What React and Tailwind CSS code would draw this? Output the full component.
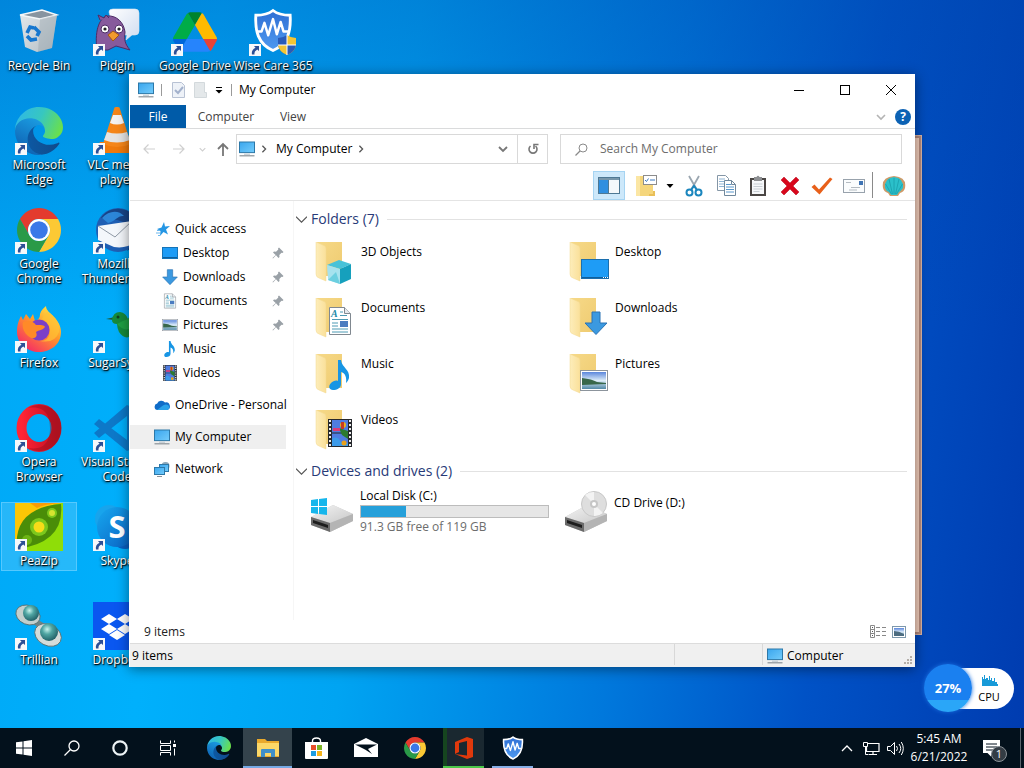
import { useState } from 'react';

// Gradients shared by all the icons
function Defs() {
  return (
    <svg className="absolute w-0 h-0" aria-hidden="true">
      <defs>
        <linearGradient id="screen" x1="0" y1="0" x2="1" y2="1">
          <stop offset="0" stopColor="#3aa6ee" />
          <stop offset="1" stopColor="#74ccfb" />
        </linearGradient>
        <linearGradient id="edgeDark" x1="0" y1="0" x2="1" y2="0">
          <stop offset="0" stopColor="#0c59a4" />
          <stop offset="1" stopColor="#114a8b" />
        </linearGradient>
        <linearGradient id="edgeBlue" x1="0.6" y1="0" x2="0.2" y2="1">
          <stop offset="0" stopColor="#1b9de2" />
          <stop offset="1" stopColor="#0d5cae" />
        </linearGradient>
        <linearGradient id="edgeGreen" x1="0" y1="0.3" x2="1" y2="0.6">
          <stop offset="0" stopColor="#2fb8e6" />
          <stop offset="0.5" stopColor="#37c7c0" />
          <stop offset="1" stopColor="#6be04a" />
        </linearGradient>
        <linearGradient id="folderBack" x1="0" y1="0" x2="1" y2="1">
          <stop offset="0" stopColor="#f6d988" />
          <stop offset="1" stopColor="#efcb70" />
        </linearGradient>
        <linearGradient id="folderFront" x1="0" y1="0" x2="1" y2="0">
          <stop offset="0" stopColor="#fdedba" />
          <stop offset="1" stopColor="#fae09a" />
        </linearGradient>
        <linearGradient id="foxBody" x1="0.9" y1="0" x2="0.2" y2="1">
          <stop offset="0" stopColor="#fff04a" />
          <stop offset="0.45" stopColor="#ff9a2a" />
          <stop offset="1" stopColor="#f5246a" />
        </linearGradient>
        <linearGradient id="operaRing" x1="0" y1="0" x2="1" y2="0">
          <stop offset="0" stopColor="#ff2536" />
          <stop offset="0.5" stopColor="#e0192c" />
          <stop offset="1" stopColor="#c01424" />
        </linearGradient>
        <linearGradient id="binSide" x1="0" y1="0" x2="1" y2="1">
          <stop offset="0" stopColor="#e4e9ec" />
          <stop offset="1" stopColor="#b4bec5" />
        </linearGradient>
        <linearGradient id="bubble" x1="0" y1="0" x2="1" y2="1">
          <stop offset="0" stopColor="#ffffff" />
          <stop offset="1" stopColor="#cfdcf0" />
        </linearGradient>
        <linearGradient id="shield" x1="0" y1="0" x2="0" y2="1">
          <stop offset="0" stopColor="#2f6fd4" />
          <stop offset="1" stopColor="#4f9af0" />
        </linearGradient>
        <linearGradient id="skype" x1="0" y1="0" x2="1" y2="1">
          <stop offset="0" stopColor="#16a8f0" />
          <stop offset="1" stopColor="#0a5fc0" />
        </linearGradient>
        <radialGradient id="gem" cx="0.4" cy="0.35" r="0.7">
          <stop offset="0" stopColor="#c8f4ee" />
          <stop offset="0.4" stopColor="#4fa5a2" />
          <stop offset="1" stopColor="#1d5a62" />
        </radialGradient>
        <linearGradient id="driveTop" x1="0" y1="0" x2="1" y2="1">
          <stop offset="0" stopColor="#f4f4f4" />
          <stop offset="1" stopColor="#c8c8c8" />
        </linearGradient>
        <linearGradient id="photo" x1="0" y1="0" x2="0" y2="1">
          <stop offset="0" stopColor="#5a86dc" />
          <stop offset="0.5" stopColor="#dcecf8" />
          <stop offset="1" stopColor="#4f87a5" />
        </linearGradient>
      </defs>
    </svg>
  );
}

function Monitor({ className = 'w-4 h-4 shrink-0' }) {
  return (
    <svg viewBox="0 0 16 16" className={className}>
      <rect x="0.5" y="1" width="15" height="10.6" fill="url(#screen)" stroke="#2d78a8" />
      <path d="M5 13.2h6" stroke="#b8c4cc" />
      <path d="M0.5 14.8h15" stroke="#8a9298" strokeWidth="1.2" />
    </svg>
  );
}

function EdgeIcon({ className }) {
  return (
    <svg viewBox="0 0 256 256" className={className}>
      <path fill="url(#edgeDark)" d="M231.3,190.5c-3.4,1.8-6.9,3.4-10.5,4.7c-11.5,4.3-23.6,6.5-35.9,6.5c-47.3,0-88.5-32.5-88.5-74.3c0.1-11.4,6.4-21.9,16.4-27.3c-42.8,1.8-53.8,46.4-53.8,72.5c0,73.9,68.1,81.4,82.8,81.4c7.9,0,19.8-2.3,27-4.6l1.3-0.4c27.6-9.5,51-28.1,66.6-52.8c1.2-1.9,0.6-4.3-1.2-5.5C234.2,189.8,232.6,189.7,231.3,190.5z" />
      <path fill="url(#edgeBlue)" d="M105.7,241.4c-8.9-5.5-16.6-12.8-22.7-21.3c-26.3-36-18.4-86.5,17.6-112.8c3.8-2.7,7.7-5.2,11.9-7.2c3.1-1.5,8.4-4.1,15.5-4c10.1,0.1,19.6,4.9,25.7,13c4,5.4,6.3,11.9,6.4,18.7c0-0.2,24.5-79.6-80-79.6c-43.9,0-80,41.7-80,78.2c-0.2,19.3,4,38.5,12.1,56c27.6,58.8,94.8,87.6,156.4,67.1C147.5,256.1,124.5,253.2,105.7,241.4L105.7,241.4z" />
      <path fill="url(#edgeGreen)" d="M152.3,148.9c-0.9,1-3.4,2.5-3.4,5.6c0,2.6,1.7,5.2,4.8,7.3c14.3,10,41.4,8.6,41.5,8.6c10.7,0,21.1-2.9,30.3-8.3c18.8-11,30.4-31.1,30.4-52.9c0.3-22.4-8-37.3-11.3-43.9C223.5,23.9,177.7,0,128,0C58,0,1,56.2,0,126.2c0.5-36.5,36.8-66,80-66c3.5,0,23.5,0.3,42,10.1c16.3,8.6,24.9,18.9,30.8,29.2c6.2,10.7,7.3,24.1,7.3,29.5C160.1,134.4,157.4,142.3,152.3,148.9L152.3,148.9z" />
    </svg>
  );
}

function ChromeIcon({ className }) {
  return (
    <svg viewBox="2 2 44 44" className={className}>
      <path fill="#e33b2e" d="M24 13H43.05A22 22 0 0 0 4.95 13L14.47 29.5A11 11 0 0 1 24 13Z" />
      <path fill="#fcc934" d="M33.53 29.5L24 46A22 22 0 0 0 43.05 13H24A11 11 0 0 1 33.53 29.5Z" />
      <path fill="#2a9a48" d="M14.47 29.5L4.95 13A22 22 0 0 0 24 46L33.53 29.5A11 11 0 0 1 14.47 29.5Z" />
      <circle cx="24" cy="24" r="11" fill="#fff" />
      <circle cx="24" cy="24" r="8.8" fill="#3a78e8" />
    </svg>
  );
}

function WiseShield({ className }) {
  return (
    <svg viewBox="0 0 42 46" className={className}>
      <path d="M21 2C16 6 9 7 3 7c-1 16 2 30 18 37C37 37 40 23 39 7 33 7 26 6 21 2Z" fill="url(#shield)" stroke="#fff" strokeWidth="3" />
      <path d="M5 24h4l3-9 4 13 5-17 4 16 4-13 3 10h5" fill="none" stroke="#fff" strokeWidth="2.6" strokeLinejoin="round" />
    </svg>
  );
}

const desktopArt = {
  bin: (
    <svg viewBox="0 0 48 48" className="w-12 h-12">
      <path d="M5 7l22-5 15 5-5 33-15 4-12-5Z" fill="url(#binSide)" />
      <path d="M5 7l22-5 15 5-17 4Z" fill="#8794a0" stroke="#f4f7f9" strokeWidth="1.4" />
      <path d="M25 11l17-4-5 33-14 4Z" fill="#8d9aa4" opacity="0.35" />
      <g fill="none" stroke="#1677cf" strokeWidth="3.6">
        <path d="M12 25l3-6 4 1" />
        <path d="M19 19l5 5-2 4" />
        <path d="M22 31l-6 1-4-4" />
      </g>
    </svg>
  ),
  pidgin: (
    <svg viewBox="0 0 48 48" className="w-12 h-12">
      <path d="M16 4q0-3 4-3h22q4 0 4 4v18q0 4-4 4h-3l-6 5 1-5H22Z" fill="url(#bubble)" stroke="#dbe5f2" strokeWidth="0.6" />
      <path d="M4 42C1 20 8 9 14 8c10-1 17 7 18 16-1 8 0 12 5 18l-14-4-8 4Z" fill="#875a9c" stroke="#4e2c66" />
      <path d="M7 12l-2-5 6 3 2-3 3 3" fill="#875a9c" stroke="#4e2c66" />
      <circle cx="12" cy="21" r="4" fill="#fff" stroke="#4e2c66" />
      <circle cx="26" cy="21" r="4" fill="#fff" stroke="#4e2c66" />
      <circle cx="12" cy="21" r="1.6" fill="#222" />
      <circle cx="26" cy="21" r="1.6" fill="#222" />
      <path d="M15 27l5-4 6 4-6 6Z" fill="#f29b2c" stroke="#a35a10" />
    </svg>
  ),
  drive: (
    <svg viewBox="0 0 87.3 78" className="w-11 h-10 mt-1 mx-auto">
      <path d="m6.6 66.85 3.85 6.65c.8 1.4 1.95 2.5 3.3 3.3l13.75-23.8h-27.5c0 1.55.4 3.1 1.2 4.5z" fill="#0066da" />
      <path d="m43.65 25-13.75-23.8c-1.35.8-2.5 1.9-3.3 3.3l-25.4 44a9.06 9.06 0 0 0 -1.2 4.5h27.5z" fill="#00ac47" />
      <path d="m73.55 76.8c1.35-.8 2.5-1.9 3.3-3.3l1.6-2.75 7.65-13.25c.8-1.4 1.2-2.95 1.2-4.5h-27.502l5.852 11.5z" fill="#ea4335" />
      <path d="m43.65 25 13.75-23.8c-1.35-.8-2.9-1.2-4.5-1.2h-18.5c-1.6 0-3.15.45-4.5 1.2z" fill="#00832d" />
      <path d="m59.8 53h-32.3l-13.75 23.8c1.35.8 2.9 1.2 4.5 1.2h50.8c1.6 0 3.15-.45 4.5-1.2z" fill="#2684fc" />
      <path d="m73.4 26.5-12.7-22c-.8-1.4-1.95-2.5-3.3-3.3l-13.75 23.8 16.15 28h27.45c0-1.55-.4-3.1-1.2-4.5z" fill="#ffba00" />
    </svg>
  ),
  wise: (
    <div className="relative w-12 h-12">
      <WiseShield className="w-10 h-[45px] mx-auto" />
      <svg viewBox="0 0 20 22" className="absolute right-0 bottom-0 w-5 h-[22px]">
        <path d="M10 1Q6 4 1 4v7q1 7 9 10Z" fill="#2a5bb8" />
        <path d="M10 1q4 3 9 3v7q-1 7-9 10Z" fill="#f4c534" />
        <path d="M1 11h9v10Q2 18 1 11Z" fill="#f4c534" />
        <path d="M10 11h9q-1 7-9 10Z" fill="#2a5bb8" />
        <path d="M10 1v20M1 11h18" stroke="#fff" />
      </svg>
    </div>
  ),
  edge: <EdgeIcon className="w-12 h-12" />,
  vlc: (
    <svg viewBox="0 0 48 48" className="w-12 h-12">
      <path d="M7 35h34l6 10q0 1-2 1H3q-2 0-2-1Z" fill="#f07a0c" />
      <path d="M23 0h2q2 0 2 2l11 35q-14 6-28 0L21 2q0-2 2-2Z" fill="#f5861a" />
      <path d="M20 8h8l3 8q-7 3-14 0Z" fill="#f3f3f3" />
      <path d="M14 25q10 3 20 0l3 8q-13 5-26 0Z" fill="#e4e4e4" />
    </svg>
  ),
  chrome: <ChromeIcon className="w-11 h-11 mx-auto mt-0.5" />,
  thunderbird: (
    <svg viewBox="0 0 48 48" className="w-12 h-12">
      <circle cx="25" cy="24" r="22" fill="#1f5fb4" />
      <path d="M8 12C16-1 37 0 43 14c5 11 1 25-9 31 8-12 5-24-4-29-8-4-15-2-22-4Z" fill="#174487" />
      <path d="M9 12c7-8 17-8 22-2-6-1-8 5-16 7Z" fill="#2c86d8" />
      <path d="M5 20l34-5 4 21q-10 7-22 5L5 34Z" fill="#f4f7fb" />
      <path d="M5 20l17 11 17-16" fill="none" stroke="#909aa6" />
    </svg>
  ),
  firefox: (
    <svg viewBox="0 0 48 48" className="w-12 h-12">
      <path d="M2 27C2 19 4 15 6 11l2 4 3-6 4 5 3-5 2 7c3-1 5-3 5-7 1-4 4-6 6-8 0 5 5 7 8 11 4 4 7 9 7 15 0 13-11 20-22 20S2 39 2 27Z" fill="url(#foxBody)" />
      <circle cx="24" cy="25" r="10.5" fill="#7b3fc8" />
      <path d="M8 17c6-2 10-1 13 3 5 0 8 0 9 2-3 4-7 3-9 5 3 7-5 8-9 3-4-4-5-9-4-13Z" fill="#ff8a28" />
      <path d="M27 14q9 4 8 13-1 9-10 9 15 3 19-9 1-14-12-20-4 3-5 7Z" fill="#ffc234" opacity="0.7" />
    </svg>
  ),
  bird: (
    <svg viewBox="0 0 48 48" className="w-12 h-12">
      <path d="M13 14l9-2-1 3Z" fill="#1c5a34" />
      <path d="M19 15q1-8 8-8 6 1 8 7L44 0q5 20-4 30-8 6-14-3-2-5-2-8-5 0-5-4Z" fill="#168a3c" />
      <path d="M24 19q5-3 11-5l6-8q2 14-5 18-6 2-12-5Z" fill="#1fa044" />
      <circle cx="25" cy="12" r="1.5" fill="#103d22" />
    </svg>
  ),
  opera: (
    <svg viewBox="0 0 48 48" className="w-12 h-12">
      <ellipse cx="24" cy="24" rx="17.5" ry="19" fill="none" stroke="url(#operaRing)" strokeWidth="10" />
      <path d="M24 1c12 0 22 9 22 23S36 47 24 47c-4 0-8-1-11-3 18 3 22-9 22-20S31 1 13 4c3-2 7-3 11-3Z" fill="#8e0c19" opacity="0.4" />
    </svg>
  ),
  vscode: (
    <svg viewBox="0 0 48 48" className="w-12 h-12">
      <path d="M34 1l12 5v36l-12 5L1 20l5-5 28 21V12L6 34l-5-5Z" fill="#0d78c8" />
    </svg>
  ),
  peazip: (
    <svg viewBox="0 0 48 48" className="w-12 h-12">
      <rect width="48" height="48" fill="#8fdd08" />
      <path d="M0 0h47Q12 5 0 43Z" fill="#fcc606" />
      <path d="M15 0h32q-18 1-25 5Z" fill="#f79b08" />
      <path d="M2 46Q-2 5 46 1 50 40 2 46Z" fill="#4a8d08" />
      <circle cx="24" cy="24" r="9" fill="#7cc81c" />
      <circle cx="24" cy="24" r="5.5" fill="#f6dc18" />
      <circle cx="37" cy="10" r="5" fill="#7cc81c" />
      <circle cx="37" cy="10" r="3" fill="#d6e430" />
      <circle cx="12" cy="37" r="5" fill="#6db414" />
    </svg>
  ),
  skype: (
    <svg viewBox="0 0 48 48" className="w-12 h-12">
      <circle cx="16" cy="16" r="14" fill="#18a4ec" />
      <circle cx="32" cy="32" r="14" fill="#0a5fc0" />
      <circle cx="24" cy="24" r="20" fill="url(#skype)" />
      <text x="24" y="35" textAnchor="middle" fontFamily="Open Sans, sans-serif" fontWeight="700" fontSize="31" fill="#fff">S</text>
    </svg>
  ),
  trillian: (
    <svg viewBox="0 0 48 48" className="w-12 h-12">
      <path d="M20 16l10 6-4 6-10-8Z" fill="#6d8486" />
      <g stroke="#526a6c" strokeWidth="0.8">
        <ellipse cx="13" cy="13" rx="12.500" ry="9.500" fill="#c3cfcd" transform="rotate(22 13 13)" />
        <ellipse cx="33" cy="33" rx="14" ry="10.500" fill="#d5dcda" transform="rotate(28 33 33)" />
      </g>
      <circle cx="16" cy="11" r="8" fill="url(#gem)" />
      <circle cx="34" cy="30" r="9" fill="url(#gem)" />
    </svg>
  ),
  dropbox: (
    <svg viewBox="0 0 48 48" className="w-12 h-12">
      <rect width="48" height="48" fill="#0a57f0" />
      <path d="M16 12l8 5-8 5-8-5ZM32 12l8 5-8 5-8-5ZM16 22l8 5-8 5-8-5ZM32 22l8 5-8 5-8-5ZM24 28l8 5-8 5-8-5Z" fill="#fff" />
    </svg>
  ),
};

const desktopColumns = [
  [
    { label: 'Recycle Bin', art: 'bin', noArrow: true },
    { label: 'Microsoft\nEdge', art: 'edge' },
    { label: 'Google\nChrome', art: 'chrome' },
    { label: 'Firefox', art: 'firefox' },
    { label: 'Opera\nBrowser', art: 'opera' },
    { label: 'PeaZip', art: 'peazip', selected: true },
    { label: 'Trillian', art: 'trillian' },
  ],
  [
    { label: 'Pidgin', art: 'pidgin' },
    { label: 'VLC media\nplayer', art: 'vlc' },
    { label: 'Mozilla\nThunderbird', art: 'thunderbird' },
    { label: 'SugarSync', art: 'bird' },
    { label: 'Visual Studio\nCode', art: 'vscode' },
    { label: 'Skype', art: 'skype' },
    { label: 'Dropbox', art: 'dropbox' },
  ],
  [{ label: 'Google Drive', art: 'drive' }],
  [{ label: 'Wise Care 365', art: 'wise' }],
];

function DesktopIcon({ item }) {
  return (
    <div className="h-[99px]">
      <button
        className={
          'w-[76px] h-[69px] flex flex-col items-center border ' +
          (item.selected ? 'border-sky-300/60 bg-white/15' : 'border-transparent')
        }
      >
        <span className="relative block w-12 h-12 shrink-0">
          {desktopArt[item.art]}
          {!item.noArrow && (
            <svg viewBox="0 0 12 12" className="absolute left-0 bottom-0 w-3 h-3">
              <rect width="12" height="12" fill="#f6f8fa" />
              <path d="M5 2h5v5L8.300 5.500Q5 7 5.500 10.500H3Q2 6 6.500 3.700Z" fill="#2c4f96" />
            </svg>
          )}
        </span>
        <span className="mt-0.5 text-xs leading-[15px] text-white text-center whitespace-pre [text-shadow:1px_1px_1px_#000,0_1px_3px_#000]">
          {item.label}
        </span>
      </button>
    </div>
  );
}

// Small pictures laid over the folders, also used at 16px in the side bar
function Film() {
  return (
    <g>
      <rect width="24" height="28" fill="#26282c" />
      <rect x="4" y="1" width="16" height="12.500" fill="#4f7ce0" />
      <rect x="4" y="14.500" width="16" height="12.500" fill="#4f7ce0" />
      <path d="M2 1v27M22 1v27" stroke="#eee" strokeWidth="2" strokeDasharray="2 2" />
      <circle cx="15" cy="6" r="3" fill="#e8b21c" />
      <path d="M11 9l9 3v8l-6-4Z" fill="#2c7a30" />
      <path d="M5 9h7v3H5Z" fill="#d83c78" />
      <path d="M4 20q5-4 9 3l7 1v3H4Z" fill="#3c9ae8" />
      <path d="M13 3h3v7h-3Z" fill="#c83a20" />
      <circle cx="16" cy="24" r="2.500" fill="#e8a01c" />
    </g>
  );
}

function DocPage() {
  return (
    <g>
      <path d="M0.500 0.500h15l6 6v21h-21Z" fill="#fff" stroke="#808890" />
      <path d="M15.500 0.500v6h6" fill="#e6eaee" stroke="#808890" />
      <text x="2" y="10" fontFamily="Liberation Serif, serif" fontStyle="italic" fontWeight="700" fontSize="10" fill="#2389a8">A</text>
      <path d="M11 5h3M11 8.500h7M3 12.500h16M3 16h6M3 19h6M3 22h16M3 25h16" stroke="#4d9ab4" />
      <rect x="11" y="14" width="8" height="6" fill="#4a7cc0" />
    </g>
  );
}

function Note() {
  return (
    <path d="M9 0h3c1 8 9 9 8 18-1 3-2 4-3 5 1-6-1-10-5-11v12c0 4-4 6-8 6s-5-4-2-7c2-2 5-3 7-2Z" fill="#1795e4" />
  );
}

function Photo() {
  return (
    <g>
      <rect x="0.500" y="0.500" width="27" height="20" fill="#fff" stroke="#8c949c" />
      <rect x="2" y="2" width="24" height="17" fill="url(#photo)" />
      <path d="M2 8q10 1 15 4l9 1v1l-24 1Z" fill="#38674a" />
    </g>
  );
}

function DownArrow() {
  return <path d="M8 1h8v11h7L12 23.500 1 12h7Z" fill="#3b99e0" stroke="#2a73b4" />;
}

function Cube() {
  return (
    <g>
      <path d="M0 5l12-5 12 4-11 5Z" fill="#48c2d8" />
      <path d="M0 5l13 4v15L1 20Z" fill="#a6e2ee" />
      <path d="M13 9l11-5v15l-11 5Z" fill="#16a0bd" />
      <path d="M1 20l8-8 4 12Z" fill="#6ccfe0" />
    </g>
  );
}

const overlays = {
  cube: <g transform="translate(14 18)"><Cube /></g>,
  desktop: (
    <g>
      <rect x="14.500" y="17.500" width="27" height="19" fill="#1e9cf6" stroke="#1b6fae" />
      <path d="M15 35.500h26" stroke="#0f5f9c" />
      <path d="M36 35.500h5" stroke="#fff" strokeDasharray="1 1" />
    </g>
  ),
  doc: <g transform="translate(16 9)"><DocPage /></g>,
  down: <g transform="translate(17 13)"><DownArrow /></g>,
  music: <g transform="translate(16 6)"><Note /></g>,
  photo: <g transform="translate(13 16)"><Photo /></g>,
  film: <g transform="translate(15 9)"><Film /></g>,
};

function FolderIcon({ kind }) {
  return (
    <svg viewBox="0 0 44 44" className="w-11 h-11 shrink-0">
      <path d="M4 0h25v34H8Z" fill="url(#folderBack)" />
      <path d="M3 0l9 4q1 1 1 3v32l-7-3q-3-1-3-4Z" fill="url(#folderFront)" stroke="#f3d890" strokeWidth="0.500" />
      {overlays[kind]}
    </svg>
  );
}

function DiskIcon({ cd }) {
  return (
    <svg viewBox="0 0 44 44" className="w-11 h-11 shrink-0">
      <path d="M0 27l22-12 20 9v7L19 42 0 35Z" fill="#c9c9c9" />
      <path d="M0 27l22-12 20 9-23 9Z" fill="url(#driveTop)" />
      <path d="M19 33l23-9v7L19 42Z" fill="#b4b4b4" />
      <path d="M0 27l19 6v9L0 35Z" fill="#6a6a6a" />
      <path d="M2 30l15 5v3L2 33Z" fill="#1d1d1d" />
      {cd ? (
        <g>
          <circle cx="29" cy="14" r="12.500" fill="#dedede" stroke="#c8c8c8" />
          <path d="M29 14L20 5a13 13 0 0 1 9-3ZM29 14l9 9a13 13 0 0 1-9 3Z" fill="#f3f3f3" />
          <circle cx="29" cy="14" r="4" fill="#c6c6c6" />
          <circle cx="29" cy="14" r="2" fill="#fff" />
        </g>
      ) : (
        <path d="M0 8l7-1v7H0ZM8 7l8-1v8H8ZM0 15h7v7l-7-1ZM8 15h8v8l-8-1Z" transform="translate(0 2)" fill="#16b6ec" />
      )}
    </svg>
  );
}

const folders = [
  { name: '3D Objects', kind: 'cube' },
  { name: 'Desktop', kind: 'desktop' },
  { name: 'Documents', kind: 'doc' },
  { name: 'Downloads', kind: 'down' },
  { name: 'Music', kind: 'music' },
  { name: 'Pictures', kind: 'photo' },
  { name: 'Videos', kind: 'film' },
];

const quickAccess = [
  {
    name: 'Desktop',
    pinned: true,
    icon: (
      <svg viewBox="0 0 16 16" className="w-4 h-4">
        <rect x="0.500" y="2.500" width="15" height="11" fill="#1e9cf6" stroke="#1574b8" />
        <path d="M1 12.500h14" stroke="#0f5f9c" />
      </svg>
    ),
  },
  { name: 'Downloads', pinned: true, icon: <svg viewBox="0 0 24 24" className="w-4 h-4"><DownArrow /></svg> },
  { name: 'Documents', pinned: true, icon: <svg viewBox="-3 -1 28 30" className="w-4 h-4"><DocPage /></svg> },
  { name: 'Pictures', pinned: true, icon: <svg viewBox="0 -3 28 27" className="w-4 h-4"><Photo /></svg> },
  { name: 'Music', icon: <svg viewBox="-4 0 30 30" className="w-4 h-4"><Note /></svg> },
  { name: 'Videos', icon: <svg viewBox="-2 0 28 28" className="w-4 h-4"><Film /></svg> },
];

function Pin() {
  return (
    <svg viewBox="0 0 12 12" className="w-3 h-3">
      <path d="M7 0.500L11.500 5l-1 1-1-.3L7.300 8l.2 2-1 1L4 8.300 1 11.500l-.5-.5L3.700 8 1 5.500l1-1 2 .2L6.300 2.500 6 1.500Z" fill="#9aa1a7" />
    </svg>
  );
}

function Chevron({ d, className = 'w-2.5 h-2.5', width = 1.6 }) {
  return (
    <svg viewBox="0 0 10 10" className={className}>
      <path d={d} fill="none" stroke="currentColor" strokeWidth={width} />
    </svg>
  );
}

function SideItem({ icon, name, active, nested, pinned }) {
  return (
    <a
      href="#"
      className={
        'h-6 flex items-center gap-[5px] ' +
        (nested ? 'pl-8 pr-0.5 ' : 'pl-6 ') +
        (active ? 'bg-[#efefef]' : '')
      }
    >
      <span className="w-4 h-4 shrink-0">{icon}</span>
      <span className="flex-1 whitespace-nowrap">{name}</span>
      {pinned && <Pin />}
    </a>
  );
}

function Sidebar() {
  return (
    <nav className="w-[156px] shrink-0 pt-4 text-xs text-black">
      <SideItem
        name="Quick access"
        icon={
          <svg viewBox="0 0 16 16" className="w-4 h-4">
            <path d="M10 1l1 4.500 5-.5-4 3.500 2 5-4.500-2.500L6 15l.5-5L3 8l4.500-1.500Z" fill="#2496e4" />
            <path d="M3 9.500h3M2 12h4M4 14.500h2" stroke="#6cb8ee" />
          </svg>
        }
      />
      {quickAccess.map((q) => (
        <SideItem key={q.name} nested {...q} />
      ))}
      <div className="mt-2">
        <SideItem
          name="OneDrive - Personal"
          icon={
            <svg viewBox="0 0 16 16" className="w-4 h-4">
              <path d="M3.500 13a3.300 3.300 0 0 1-.3-6.500A4.500 4.500 0 0 1 11 5.500 3.800 3.800 0 0 1 13 13Z" fill="#0f6cc8" />
              <path d="M3 13l6-4.500q3-2 5.500 0A2.600 2.600 0 0 1 13.400 13Z" fill="#2aa2ea" />
            </svg>
          }
        />
      </div>
      <div className="mt-2">
        <SideItem name="My Computer" icon={<Monitor />} active />
      </div>
      <div className="mt-2">
        <SideItem
          name="Network"
          icon={
            <svg viewBox="0 0 16 16" className="w-4 h-4">
              <circle cx="11.500" cy="5" r="4" fill="#8aa6b8" />
              <rect x="5.500" y="3.500" width="9" height="7" fill="url(#screen)" stroke="#2d78a8" />
              <rect x="0.500" y="6.500" width="10" height="7" fill="url(#screen)" stroke="#2d78a8" />
              <path d="M3 15.500h5" stroke="#8a9298" />
            </svg>
          }
        />
      </div>
    </nav>
  );
}

function GroupHeading({ children }) {
  return (
    <h2 className="h-5 flex items-center text-sm leading-5 text-[#283a78] whitespace-nowrap">
      <Chevron d="M0 2.500l5 5 5-5" className="w-[11px] h-[11px] mr-1 text-[#555]" width={1} />
      {children}
      <span className="ml-2 h-px flex-1 bg-[#e2e2e2]" />
    </h2>
  );
}

function FileArea() {
  return (
    <main className="flex-1 min-w-0 ml-[7px] border-l border-[#f6f6f6] pl-0.5 pr-2 pt-2 text-xs text-black">
      <GroupHeading>Folders (7)</GroupHeading>
      <div className="mt-2 ml-[17px] grid grid-cols-[repeat(auto-fill,254px)]">
        {folders.map((f) => (
          <button key={f.name} className="h-14 pt-[5px] flex gap-1 items-start text-left">
            <FolderIcon kind={f.kind} />
            <span className="pt-0.5 leading-4">{f.name}</span>
          </button>
        ))}
      </div>
      <GroupHeading>Devices and drives (2)</GroupHeading>
      <div className="mt-[7px] ml-[15px] grid grid-cols-[repeat(auto-fill,254px)]">
        <button className="flex gap-[5px] text-left">
          <span className="pt-0.5"><DiskIcon /></span>
          <span className="w-[189px]">
            <span className="block leading-4">Local Disk (C:)</span>
            <span className="block h-[13px] my-px border border-[#bcbcbc] bg-[#e6e6e6]">
              <span className="block h-full w-[24%] bg-[#26a0da]" />
            </span>
            <span className="block leading-4 text-[#6d6d6d]">91.3 GB free of 119 GB</span>
          </span>
        </button>
        <button className="flex gap-[5px] text-left items-start">
          <span className="pt-0.5"><DiskIcon cd /></span>
          <span className="pt-[7px] leading-4">CD Drive (D:)</span>
        </button>
      </div>
    </main>
  );
}

function TitleBar() {
  return (
    <header className="h-[31px] flex items-center pl-2 pr-px text-black">
      <Monitor />
      <span className="ml-[7px] h-3 w-px bg-[#9a9a9a]" />
      <button aria-label="Properties" className="ml-2.5">
        <svg viewBox="0 0 13 16" className="w-[13px] h-4">
          <path d="M0.500 0.500h9l3 3v12h-12Z" fill="#eef2f8" stroke="#b8c2d4" />
          <path d="M3 8l3 3 5-6" fill="none" stroke="#a3b1cc" strokeWidth="2" />
        </svg>
      </button>
      <button aria-label="New folder" className="ml-[9px]">
        <svg viewBox="0 0 13 16" className="w-[13px] h-4">
          <path d="M0.500 0.500h10v10h2v5h-12Z" fill="#e4e8ea" stroke="#d3d9dc" />
        </svg>
      </button>
      <button aria-label="Customize toolbar" className="ml-2">
        <svg viewBox="0 0 8 8" className="w-2 h-2">
          <path d="M1 1.500h6" stroke="#000" />
          <path d="M0.500 4h7L4 7.500Z" fill="#000" />
        </svg>
      </button>
      <span className="ml-2 h-3 w-px bg-[#9a9a9a]" />
      <h1 className="ml-[7px] flex-1 text-xs">My Computer</h1>
      <button aria-label="Minimize" className="w-[46px] h-full flex items-center justify-center">
        <svg viewBox="0 0 10 10" className="w-2.5 h-2.5"><path d="M0 5.500h10" stroke="#000" /></svg>
      </button>
      <button aria-label="Maximize" className="w-[46px] h-full flex items-center justify-center">
        <svg viewBox="0 0 10 10" className="w-2.5 h-2.5"><rect x="0.500" y="0.500" width="9" height="9" fill="none" stroke="#000" /></svg>
      </button>
      <button aria-label="Close" className="w-[46px] h-full flex items-center justify-center">
        <svg viewBox="0 0 10 10" className="w-2.5 h-2.5"><path d="M0 0l10 10M10 0L0 10" stroke="#000" /></svg>
      </button>
    </header>
  );
}

function RibbonTabs() {
  return (
    <div className="h-6 flex items-center border-b border-[#dadbdc] text-xs text-[#444]">
      <button className="w-14 h-full bg-[#005ba8] text-white">File</button>
      <button className="w-20 h-full">Computer</button>
      <button className="w-[54px] h-full">View</button>
      <button aria-label="Expand ribbon" className="ml-auto text-[#b4b4b4]">
        <Chevron d="M1 3l4 4 4-4" />
      </button>
      <button aria-label="Help" className="ml-[9px] mr-1">
        <span className="block w-4 h-4 rounded-full bg-[#0c62b4] text-white font-bold text-xs leading-4">?</span>
      </button>
    </div>
  );
}

function AddressRow({ query, setQuery }) {
  return (
    <div className="h-10 flex items-center pl-[13px] pr-[13px] text-xs">
      <button aria-label="Back" className="text-[#cfcfcf]">
        <svg viewBox="0 0 12 12" className="w-3 h-3"><path d="M12 6H1M5.500 1.500L1 6l4.500 4.500" fill="none" stroke="currentColor" strokeWidth="1.200" /></svg>
      </button>
      <button aria-label="Forward" className="ml-[18px] text-[#cfcfcf]">
        <svg viewBox="0 0 12 12" className="w-3 h-3"><path d="M0 6h11M6.500 1.500L11 6l-4.500 4.500" fill="none" stroke="currentColor" strokeWidth="1.200" /></svg>
      </button>
      <button aria-label="Recent locations" className="ml-3.5 text-[#cfcfcf]">
        <Chevron d="M1 3l4 4 4-4" className="w-[7px] h-[7px]" />
      </button>
      <button aria-label="Up" className="ml-[11px] text-[#777]">
        <svg viewBox="0 0 12 14" className="w-3 h-3.5"><path d="M6 14V2M1 7l5-5 5 5" fill="none" stroke="currentColor" strokeWidth="1.800" /></svg>
      </button>
      <div className="ml-[7px] h-[30px] flex-1 flex items-center border border-[#d9d9d9] pl-0.5 text-black">
        <Monitor />
        <Chevron d="M3 1l4 4-4 4" className="w-2 h-2 ml-[5px] text-[#555]" />
        <button className="ml-2">My Computer</button>
        <Chevron d="M3 1l4 4-4 4" className="w-2 h-2 ml-[5px] text-[#555]" />
        <button aria-label="Previous locations" className="ml-auto mr-[9px] text-[#777]">
          <Chevron d="M1 3l4 4 4-4" width={1.8} />
        </button>
        <button aria-label="Refresh" className="w-[30px] h-full border-l border-[#d9d9d9] flex items-center justify-center text-[#777]">
          <svg viewBox="0 0 12 12" className="w-3 h-3">
            <path d="M8.500 3A4 4 0 1 1 3.500 3" fill="none" stroke="currentColor" strokeWidth="1.600" />
            <path d="M7 6V1.500h4.500" fill="none" stroke="currentColor" strokeWidth="1.600" />
          </svg>
        </button>
      </div>
      <label className="ml-3 w-[342px] h-[30px] flex items-center border border-[#d9d9d9] pl-3.5">
        <svg viewBox="0 0 13 13" className="w-[13px] h-[13px]">
          <circle cx="8" cy="5" r="4" fill="none" stroke="#8a8a8a" />
          <path d="M5 8L0.500 12.500" stroke="#8a8a8a" strokeWidth="1.200" />
        </svg>
        <input
          type="text"
          aria-label="Search My Computer"
          className="ml-3 flex-1 min-w-0 outline-none placeholder:text-[#6d6d6d]"
          placeholder="Search My Computer"
          value={query}
          onChange={(e) => setQuery(e.target.value)}
        />
      </label>
    </div>
  );
}

function Tool({ label, children, active }) {
  return (
    <button
      aria-label={label}
      className={
        'w-8 h-[29px] flex items-center justify-center ' +
        (active ? 'mr-[5px] bg-[#cde8fa] border border-[#a6d4f2]' : '')
      }
    >
      {children}
    </button>
  );
}

function Toolbar() {
  return (
    <div className="h-8 flex items-end justify-end pr-[5px] border-b border-[#e4e4e4]">
      <Tool label="Navigation pane" active>
        <svg viewBox="0 0 22 17" className="w-[22px] h-[17px]">
          <rect x="0.500" y="0.500" width="21" height="16" fill="#f4f8fb" stroke="#4d7894" />
          <path d="M1 1h20v2H1Z" fill="#7796aa" />
          <path d="M1 3h9v13H1Z" fill="#2f8fe0" />
          <path d="M10.500 3v13" stroke="#4d7894" />
        </svg>
      </Tool>
      <Tool label="Folder options">
        <svg viewBox="0 0 22 22" className="w-[22px] h-[22px]">
          <path d="M1 1h7v3h10v17H1Z" fill="#f5d67c" />
          <path d="M1 1h4v20H1Z" fill="#fbe6a4" />
          <rect x="8.500" y="0.500" width="13" height="9" fill="#fff" stroke="#8c8c8c" />
          <path d="M10 5l1.500 1.500 2-3" fill="none" stroke="#3a78c0" />
          <path d="M15 5h5" stroke="#3a78c0" />
          <path d="M14 21h6v-5h-2v3h-4Z" fill="#e9bf58" />
        </svg>
      </Tool>
      <button aria-label="More options" className="w-4 h-[29px] flex items-center justify-center">
        <svg viewBox="0 0 8 4" className="w-2 h-1"><path d="M0.500 0h7L4 4Z" fill="#000" /></svg>
      </button>
      <Tool label="Cut">
        <svg viewBox="0 0 18 22" className="w-[18px] h-[22px]">
          <path d="M4 1l8 14M14 1L6 15" stroke="#9ba6b0" strokeWidth="1.800" />
          <circle cx="4.500" cy="17.500" r="3" fill="none" stroke="#1b86be" strokeWidth="2" />
          <circle cx="13.500" cy="17.500" r="3" fill="none" stroke="#1b86be" strokeWidth="2" />
          <path d="M6 15l3-4 3 4" fill="none" stroke="#1b86be" strokeWidth="2" />
        </svg>
      </Tool>
      <Tool label="Copy">
        <svg viewBox="0 0 19 21" className="w-[19px] h-[21px]">
          <path d="M0.500 0.500h8l3 3v12H0.500Z" fill="#fff" stroke="#8496a6" />
          <path d="M2 4h6M2 6.500h7M2 9h7M2 11.500h7" stroke="#8fb4d4" />
          <path d="M7.500 5.500h7l4 4v11h-11Z" fill="#fff" stroke="#70889c" />
          <path d="M9 9.500h5M9 12h8M9 14.500h8M9 17h8" stroke="#5a98cc" />
          <path d="M14.500 5.500v4h4" fill="none" stroke="#70889c" />
        </svg>
      </Tool>
      <Tool label="Paste">
        <svg viewBox="0 0 18 22" className="w-[18px] h-[22px]">
          <rect x="1" y="3" width="16" height="18" fill="#4a4644" />
          <rect x="3" y="5" width="12" height="14" fill="#f6f8fa" />
          <path d="M4.500 9h9M4.500 11.500h9M4.500 14h9M4.500 16.500h6" stroke="#c8ced4" />
          <path d="M5 2h2.500q1.500-2.500 3 0H13v4H5Z" fill="#8d8f92" />
        </svg>
      </Tool>
      <Tool label="Delete">
        <svg viewBox="0 0 20 20" className="w-5 h-5">
          <path d="M4 1l6 6 6-6 3 3-6 6 6 6-3 3-6-6-6 6-3-3 6-6-6-6Z" fill="#d8071c" stroke="#b4081a" strokeWidth="0.500" />
        </svg>
      </Tool>
      <Tool label="Rename">
        <svg viewBox="0 0 22 18" className="w-[22px] h-[18px]">
          <path d="M0.500 10l3-2.500 4.500 5L19 0.500l2.500 1.500L8.500 17.500Z" fill="#e8601a" />
        </svg>
      </Tool>
      <Tool label="Properties">
        <svg viewBox="0 0 22 14" className="w-[22px] h-3.5">
          <rect x="0.500" y="0.500" width="21" height="13" fill="#fafcfd" stroke="#98a2ac" />
          <path d="M3 3.500h5M8 8.500h9M6 11h8" stroke="#b4bbc2" />
          <rect x="16" y="2" width="4" height="4" fill="#3f74b4" />
        </svg>
      </Tool>
      <span className="ml-0.5 mr-[5px] w-px h-[26px] mb-0.5 bg-[#8a8a8a]" />
      <Tool label="Classic Shell">
        <svg viewBox="0 0 24 22" className="w-6 h-[22px]">
          <path d="M1 13Q-1 2 12 1q13 1 11 12-1 4-5 5l-2 3H8l-2-3q-4-1-5-5Z" fill="#cf9a68" />
          <path d="M3 13Q2 3 12 2q10 1 9 11-2 3-4 4l-2 3H9l-2-3q-3-1-4-4Z" fill="#2bc0ca" />
          <path d="M12 19V3M10.500 19L7 4M13.500 19L17 4M9.500 19L3.500 9M14.500 19l6-10" stroke="#1a9eab" strokeWidth="0.800" />
        </svg>
      </Tool>
    </div>
  );
}

function StatusRows() {
  return (
    <footer className="text-xs text-[#222]">
      <div className="h-[23px] flex items-center pl-3.5 pr-[9px]">
        <span className="flex-1">9 items</span>
        <button aria-label="Details view">
          <svg viewBox="0 0 16 13" className="w-4 h-[13px]">
            <path d="M0.500 0.500h4v12h-4ZM0.500 4.500h4M0.500 8.500h4" fill="none" stroke="#8a8a8a" />
            <path d="M6 2.500h10M6 6.500h10M6 10.500h10" stroke="#888" strokeDasharray="4 2" />
            <path d="M2 2.500h1M2 6.500h1M2 10.500h1" stroke="#555" />
          </svg>
        </button>
        <button aria-label="Large icons view" className="ml-1.5">
          <svg viewBox="0 0 14 12" className="w-3.5 h-3">
            <rect x="0.500" y="0.500" width="13" height="11" fill="#fff" stroke="#7d98ac" />
            <rect x="2" y="2" width="10" height="8" fill="url(#photo)" />
            <path d="M2 5q5 0 10 3v2H2Z" fill="#4c6c80" />
          </svg>
        </button>
      </div>
      <div className="h-6 flex items-stretch bg-[#f0f0f0] border-t border-[#dcdcdc] text-black">
        <span className="flex-1 pl-0.5 leading-6">9 items</span>
        <span className="w-[89px] mb-0.5 border-x border-[#d8d8d8]" />
        <span className="w-[152px] pl-1 flex items-center gap-1">
          <Monitor />
          <span className="flex-1">Computer</span>
          <svg viewBox="0 0 9 9" className="w-[9px] h-[9px] mr-[3px] self-end mb-0.5">
            <path d="M7 1h2M4 4h2M7 4h2M1 7h2M4 7h2M7 7h2" stroke="#b4aea8" strokeWidth="1.800" />
          </svg>
        </span>
      </div>
    </footer>
  );
}

function CpuWidget() {
  return (
    <div className="absolute right-2.5 bottom-4 w-[90px] h-12 flex items-center">
      <div className="ml-6 h-[41px] flex-1 rounded-r-full bg-white flex flex-col items-center justify-center pl-5 pr-1 text-[11px] leading-[13px] text-black">
        <svg viewBox="0 0 17 12" className="w-[17px] h-3">
          <path d="M1 12V3h1v2h1V1h1v4h1V4h2v2h1V2h1v4h1V4h1v3h2V4h1v4h2v2h1v2Z" fill="#189ad8" />
        </svg>
        <span className="mt-1">CPU</span>
      </div>
      <div className="absolute left-0 top-0 w-12 h-12 rounded-full bg-[linear-gradient(#1a80f0_0_74%,#2aa6f8_74%)] shadow-[0_0_4px_#1a70e0] text-white font-bold text-[13px] leading-[48px] text-center">
        27%
      </div>
    </div>
  );
}

function Taskbar() {
  return (
    <footer className="relative h-10 shrink-0 flex items-stretch bg-[#03111c] text-white">
      <TaskButton label="Start" narrow>
        <svg viewBox="0 0 16 16" className="w-4 h-4">
          <path d="M0 2.300l6.500-.9v6.100H0ZM7.500 1.200L16 0v7.500H7.500ZM0 8.500h6.500v6.100L0 13.700ZM7.500 8.500H16V16l-8.500-1.200Z" fill="#fff" />
        </svg>
      </TaskButton>
      <TaskButton label="Search" narrow>
        <svg viewBox="0 0 16 16" className="w-4 h-4">
          <circle cx="10" cy="6" r="5" fill="none" stroke="#fff" strokeWidth="1.300" />
          <path d="M6.500 9.500L0.500 15.500" stroke="#fff" strokeWidth="1.300" />
        </svg>
      </TaskButton>
      <TaskButton label="Cortana" narrow>
        <svg viewBox="0 0 16 16" className="w-4 h-4"><circle cx="8" cy="8" r="6.700" fill="none" stroke="#eef4f6" strokeWidth="2.200" /></svg>
      </TaskButton>
      <TaskButton label="Task view" narrow>
        <svg viewBox="0 0 16 16" className="w-4 h-4">
          <path d="M0.500 0.500v3h10v-3M0.500 15.500v-3h10v3M0.500 5.500h10v5h-10ZM14.500 0.500v2M14.500 8.500v7" fill="none" stroke="#fff" />
          <rect x="13" y="4" width="3" height="3" fill="#fff" />
        </svg>
      </TaskButton>
      <span className="w-0.5" />
      <TaskButton label="Microsoft Edge"><EdgeIcon className="w-6 h-6" /></TaskButton>
      <TaskButton label="File Explorer" tone="bg-[#34434c]" line="bg-[#76a9e4]" full>
        <svg viewBox="0 0 22 18" className="w-[22px] h-[18px]">
          <path d="M0 0h8l2 2h12v16H0Z" fill="#e9a92c" />
          <path d="M0 4h22v13H0Z" fill="#fbd768" />
          <path d="M4 18v-7q0-1 1-1h12q1 0 1 1v7h-4v-4H8v4Z" fill="#3f8fc8" />
        </svg>
      </TaskButton>
      <TaskButton label="Microsoft Store">
        <svg viewBox="0 0 23 23" className="w-[23px] h-[23px]">
          <path d="M7.500 6V4q0-3 4-3t4 3v2" fill="none" stroke="#fff" strokeWidth="1.400" />
          <path d="M0 5h23v16q0 1-1 1H1q-1 0-1-1Z" fill="#fff" />
          <path d="M6 8h5v5H6Z" fill="#e8502c" />
          <path d="M12 8h5v5h-5Z" fill="#7cb426" />
          <path d="M6 14h5v5H6Z" fill="#1e9ce0" />
          <path d="M12 14h5v5h-5Z" fill="#f6b41c" />
        </svg>
      </TaskButton>
      <TaskButton label="Mail">
        <svg viewBox="0 0 24 20" className="w-6 h-5">
          <path d="M0 6l12-6 12 6v13H0Z" fill="#fff" />
          <path d="M1 6.500h22l-9 4.500 4 5-7-4.500Z" fill="#03111c" />
        </svg>
      </TaskButton>
      <TaskButton label="Google Chrome"><ChromeIcon className="w-[22px] h-[22px]" /></TaskButton>
      <TaskButton label="Office" tone="bg-[#1a2830] border-l-4 border-[#16451f]" line="bg-[#4cc84a]">
        <svg viewBox="0 0 18 22" className="w-[18px] h-[22px]">
          <path d="M0 5l12-5 6 2v18l-6 2L0 17l12 1.500V4L4 6v9l-4 2Z" fill="#e0390c" />
        </svg>
      </TaskButton>
      <TaskButton label="Wise Care 365" line="bg-[#86aee6]"><WiseShield className="w-[22px] h-6" /></TaskButton>

      <div className="ml-auto flex items-center">
        <button aria-label="Show hidden icons">
          <svg viewBox="0 0 12 8" className="w-3 h-2"><path d="M1 7l5-5 5 5" fill="none" stroke="#fff" strokeWidth="1.300" /></svg>
        </button>
        <button aria-label="Network" className="ml-2.5">
          <svg viewBox="0 0 17 15" className="w-[17px] h-[15px]">
            <path d="M5 2.500h11v8H3.500V6M10 10.500v3M6 13.500h8" fill="none" stroke="#fff" strokeWidth="1.200" />
            <path d="M0.500 1.500h4v4h-4ZM2.500 5.500v8h3" fill="none" stroke="#fff" />
          </svg>
        </button>
        <button aria-label="Volume" className="ml-[7px]">
          <svg viewBox="0 0 17 15" className="w-[17px] h-[15px]">
            <path d="M0.500 5.500h3l4-4v12l-4-4h-3Z" fill="none" stroke="#fff" />
            <path d="M9.500 5q2 2.500 0 5M12 3q3.500 4.500 0 9M14.300 1q4 6.500 0 13" fill="none" stroke="#fff" />
          </svg>
        </button>
        <div className="ml-2 w-[54px] text-xs leading-[18px] flex flex-col items-center whitespace-nowrap">
          <span>5:45 AM</span>
          <span>6/21/2022</span>
        </div>
        <button aria-label="Notifications" className="relative ml-[17px] mr-5">
          <svg viewBox="0 0 17 17" className="w-[17px] h-[17px]">
            <path d="M0 0h17v13h-9v3.500L4.500 13H0Z" fill="#fff" />
            <path d="M3 4h11M3 7h11M3 10h7" stroke="#03111c" />
          </svg>
          <span className="absolute left-2 top-1.5 w-4 h-4 rounded-full bg-[#333c44] border border-[#8b9298] text-[11px] leading-[14px] text-center">1</span>
        </button>
        <button aria-label="Show desktop" className="w-1 h-10 border-l border-[#5a646c]" />
      </div>
    </footer>
  );
}

function TaskButton({ label, children, narrow, tone = '', line, full }) {
  return (
    <button
      aria-label={label}
      className={'relative flex items-center justify-center ' + (narrow ? 'w-12' : 'w-[49px]')}
    >
      <span className={'absolute inset-y-0 ' + (full ? 'inset-x-0 ' : 'inset-x-1 ') + tone} />
      <span className="relative">{children}</span>
      {line && <span className={'absolute bottom-0 h-0.5 ' + (full ? 'inset-x-0 ' : 'inset-x-1 ') + line} />}
    </button>
  );
}

export default function App() {
  const [query, setQuery] = useState('');

  return (
    <div className="relative h-screen w-full overflow-hidden flex flex-col font-['Open_Sans','Noto_Sans',sans-serif]">
      <Defs />
      <div className="relative flex-1 min-h-0 bg-[linear-gradient(to_bottom,rgba(0,70,170,0.35),rgba(0,70,170,0)_45%),linear-gradient(97deg,#00a8f6_0%,#00b0fc_20%,#00a4f2_38%,#0078dc_62%,#0052c6_80%,#003cb0_100%)]">
        <div className="flex gap-0.5 pl-px pt-[7px]">
          {desktopColumns.map((column, i) => (
            <div key={i} className="w-[76px]">
              {column.map((item) => (
                <DesktopIcon key={item.label} item={item} />
              ))}
            </div>
          ))}
        </div>

        {/* edge of the window underneath */}
        <div className="absolute right-[103px] top-[136px] bottom-[94px] w-10 bg-[#f2cdbb] border-2 border-[#b58a7c] outline outline-[#d9b3a2]" />

        <section className="absolute left-[129px] right-[109px] top-[74px] bottom-[61px] flex flex-col bg-white pl-px shadow-[0_2px_12px_rgba(0,0,0,0.45)]">
          <TitleBar />
          <RibbonTabs />
          <AddressRow query={query} setQuery={setQuery} />
          <Toolbar />
          <div className="flex-1 min-h-0 flex overflow-hidden">
            <Sidebar />
            <FileArea />
          </div>
          <StatusRows />
        </section>

        <CpuWidget />
      </div>
      <Taskbar />
    </div>
  );
}
